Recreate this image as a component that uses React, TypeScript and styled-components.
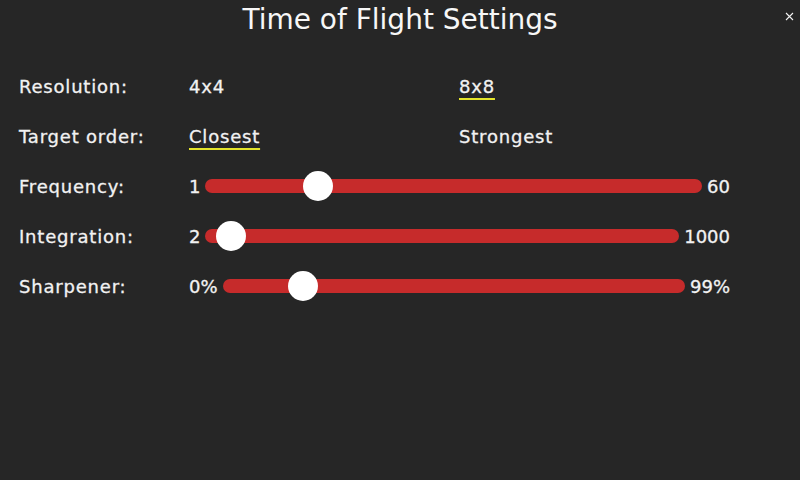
import React from "react";
import styled, { createGlobalStyle } from "styled-components";

const GlobalStyle = createGlobalStyle`
  html, body {
    margin: 0;
    padding: 0;
    background: #262626;
  }
  body {
    font-family: "DejaVu Sans", "Liberation Sans", sans-serif;
    color: #f2f2f2;
  }
`;

const Screen = styled.div`
  position: relative;
  width: 800px;
  height: 480px;
  background: #262626;
  overflow: hidden;
`;

const Title = styled.h1`
  margin: 0;
  padding-top: 3px;
  font-size: 28px;
  font-weight: normal;
  line-height: 34px;
  text-align: center;
  color: #f7f7f7;
`;

const CloseButton = styled.button`
  position: absolute;
  top: 11px;
  right: 5px;
  width: 11px;
  height: 11px;
  padding: 0;
  border: 0;
  background: none;
  display: flex;
  align-items: center;
  justify-content: center;
  cursor: pointer;
`;

const Form = styled.div`
  display: grid;
  grid-template-columns: 170px 541px;
  grid-auto-rows: 50px;
  align-items: center;
  padding: 24px 0 0 19px;
  font-size: 18px;
  letter-spacing: 0.8px;
  -webkit-text-stroke: 0.3px #f2f2f2;
`;

const Label = styled.div`
  white-space: nowrap;
`;

const Options = styled.div`
  display: grid;
  grid-template-columns: 270px auto;
  align-items: center;
`;

const Option = styled.span<{ $selected?: boolean }>`
  justify-self: start;
  white-space: nowrap;
  cursor: pointer;
  text-decoration: ${(p) => (p.$selected ? "underline" : "none")};
  text-decoration-color: #e4e42a;
  text-decoration-thickness: 2px;
  text-underline-offset: 5px;
`;

const SliderRow = styled.div`
  display: flex;
  align-items: center;
  gap: 5px;
`;

const Bound = styled.span`
  letter-spacing: 0;
  white-space: nowrap;
`;

const Track = styled.div`
  position: relative;
  flex: 1;
  height: 14px;
  border-radius: 7px;
  background: #c62b2b;
`;

const Knob = styled.div`
  position: absolute;
  top: 50%;
  width: 30px;
  height: 30px;
  border-radius: 50%;
  background: #ffffff;
  transform: translate(-50%, -50%);
`;

type Choice = { label: string; options: string[]; selected: number };
type Range = { label: string; min: string; max: string; pct: number };

const choices: Choice[] = [
  { label: "Resolution:", options: ["4x4", "8x8"], selected: 1 },
  { label: "Target order:", options: ["Closest", "Strongest"], selected: 0 },
];

const ranges: Range[] = [
  { label: "Frequency:", min: "1", max: "60", pct: 22.7 },
  { label: "Integration:", min: "2", max: "1000", pct: 5.3 },
  { label: "Sharpener:", min: "0%", max: "99%", pct: 17.4 },
];

const CloseIcon = () => (
  <svg width="9" height="9" viewBox="0 0 9 9">
    <path d="M1 1 L8 8 M8 1 L1 8" stroke="#f2f2f2" strokeWidth="1.1" />
  </svg>
);

const App = () => {
  return (
    <Screen>
      <GlobalStyle />
      <Title>Time of Flight Settings</Title>
      <CloseButton aria-label="Close">
        <CloseIcon />
      </CloseButton>
      <Form>
        {choices.map((c) => (
          <React.Fragment key={c.label}>
            <Label>{c.label}</Label>
            <Options>
              {c.options.map((o, i) => (
                <Option key={o} $selected={i === c.selected}>
                  {o}
                </Option>
              ))}
            </Options>
          </React.Fragment>
        ))}
        {ranges.map((r) => (
          <React.Fragment key={r.label}>
            <Label>{r.label}</Label>
            <SliderRow>
              <Bound>{r.min}</Bound>
              <Track>
                <Knob style={{ left: `${r.pct}%` }} />
              </Track>
              <Bound>{r.max}</Bound>
            </SliderRow>
          </React.Fragment>
        ))}
      </Form>
    </Screen>
  );
};

export default App;
